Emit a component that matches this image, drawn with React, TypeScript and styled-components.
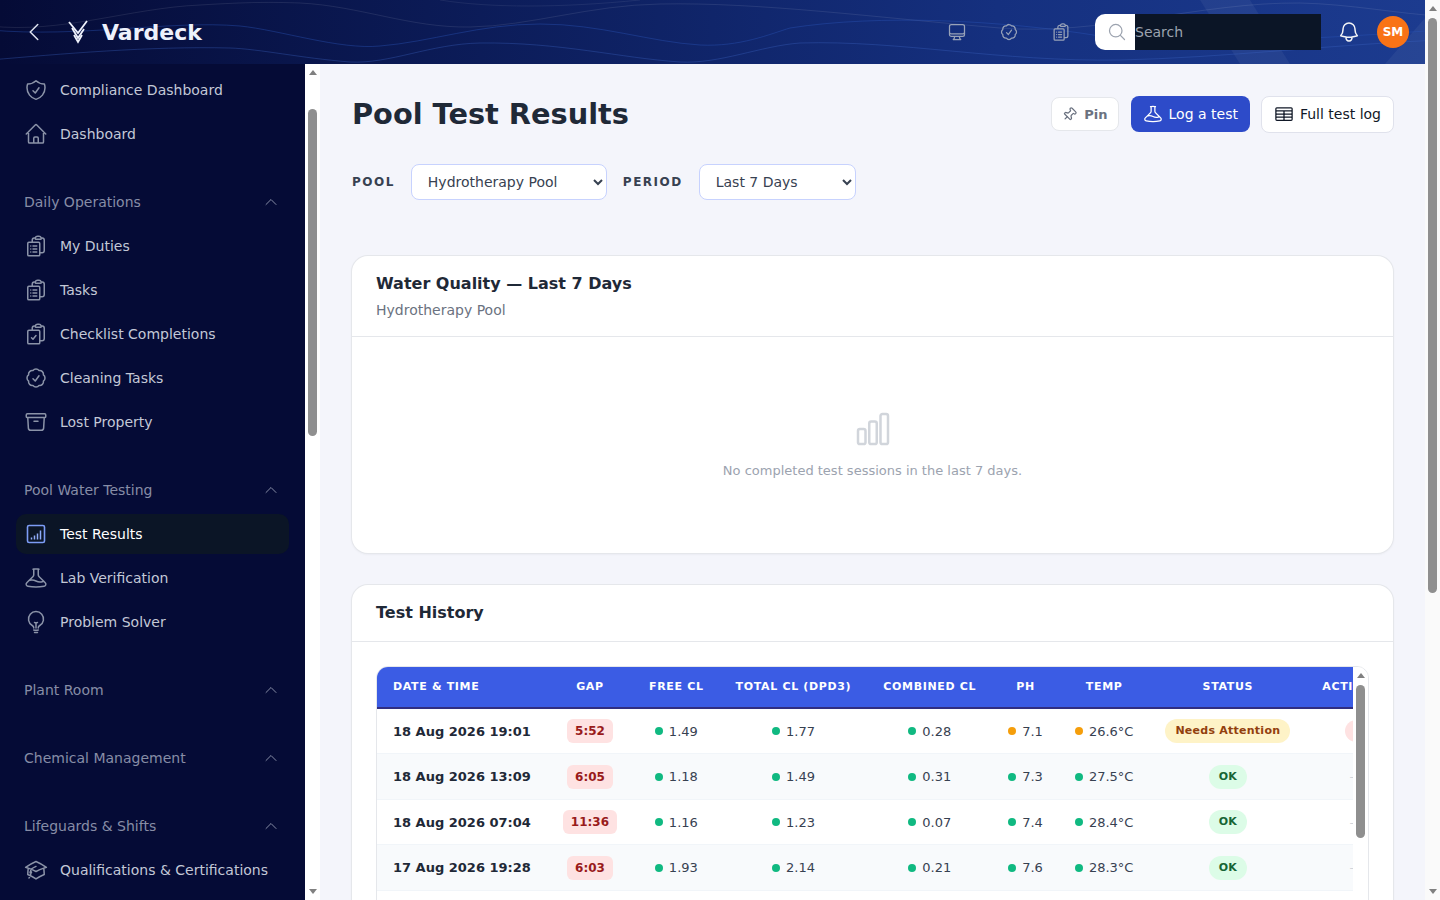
import React from "react";
import styled, { createGlobalStyle } from "styled-components";
import {
  HiOutlineAcademicCap,
  HiOutlineArchiveBox,
  HiOutlineBeaker,
  HiOutlineBell,
  HiOutlineChartBar,
  HiOutlineCheckBadge,
  HiOutlineChevronLeft,
  HiOutlineChevronUp,
  HiOutlineClipboardDocumentCheck,
  HiOutlineClipboardDocumentList,
  HiOutlineComputerDesktop,
  HiOutlineHome,
  HiOutlineLightBulb,
  HiOutlineMagnifyingGlass,
  HiOutlineShieldCheck,
  HiOutlineTableCells,
} from "react-icons/hi2";
import { Pin } from "lucide-react";

const GlobalStyle = createGlobalStyle`
  * { box-sizing: border-box; }
  html, body { margin: 0; padding: 0; }
  html { scrollbar-width: none; }
  body {
    background: #f4f5fb;
    font-family: "DejaVu Sans", sans-serif;
    color: #1f2937;
  }
`;

const Page = styled.div`
  display: flex;
  align-items: flex-start;
`;

const PageColumn = styled.div`
  flex: 1;
  min-width: 0;
`;

const Rail = styled.div<{ $bg?: string }>`
  flex: 0 0 15px;
  display: flex;
  flex-direction: column;
  background: ${(p) => p.$bg || "#fff"};
`;

const PageRail = styled(Rail)`
  position: sticky;
  top: 0;
  height: 100vh;
  z-index: 30;
`;

const RailArrow = styled.div<{ $down?: boolean }>`
  flex: 0 0 17px;
  display: flex;
  align-items: center;
  justify-content: center;

  &::before {
    content: "";
    border-left: 4.5px solid transparent;
    border-right: 4.5px solid transparent;
    border-top: ${(p) => (p.$down ? "5px solid #808080" : "none")};
    border-bottom: ${(p) => (p.$down ? "none" : "5px solid #808080")};
  }
`;

const RailTrack = styled.div`
  flex: 1;
  min-height: 0;
`;

const RailThumb = styled.div<{ $top: number; $height: number }>`
  width: 9px;
  height: ${(p) => p.$height}px;
  margin: ${(p) => p.$top}px 3px 0;
  border-radius: 5px;
  background: #8f8f8f;
`;

const TopBar = styled.header`
  position: sticky;
  top: 0;
  z-index: 20;
  height: 64px;
  display: flex;
  align-items: center;
  padding: 0 16px 0 22px;
  overflow: hidden;
  background: linear-gradient(90deg, #050b36 0%, #0b1a55 30%, #15307f 70%, #1c3b8f 100%);
`;

const WaveLayer = styled.svg`
  position: absolute;
  inset: 0;
  width: 100%;
  height: 100%;
  pointer-events: none;
`;

const BackButton = styled.button`
  position: relative;
  display: flex;
  padding: 0;
  border: none;
  background: none;
  color: #dfe3f0;
  font-size: 24px;
  margin-right: 22px;
`;

const Brand = styled.div`
  position: relative;
  display: flex;
  align-items: center;
  gap: 12px;
  color: #eef1fb;
  font-size: 22px;
  font-weight: 700;
`;

const TopActions = styled.div`
  position: relative;
  margin-left: auto;
  display: flex;
  align-items: center;
`;

const TopIcon = styled.span`
  display: flex;
  width: 20px;
  margin-right: 32px;
  color: #98a2b8;
  font-size: 20px;
`;

const SearchBox = styled.div`
  display: flex;
  height: 36px;
  width: 226px;
  margin-left: -8px;
  margin-right: 16px;
`;

const SearchIconWrap = styled.span`
  display: flex;
  align-items: center;
  justify-content: center;
  width: 40px;
  padding-left: 4px;
  background: #fff;
  border-radius: 10px 0 0 10px;
  color: #9ca3af;
  font-size: 20px;
`;

const SearchInput = styled.input`
  flex: 1;
  min-width: 0;
  border: none;
  outline: none;
  padding: 0;
  background: #0b1526;
  color: #fff;
  font: 14px "DejaVu Sans", sans-serif;

  &::placeholder {
    color: #9ca3af;
  }
`;

const BellWrap = styled.span`
  display: flex;
  color: #f3f4f6;
  font-size: 24px;
  margin-right: 16px;
`;

const Avatar = styled.div`
  display: flex;
  align-items: center;
  justify-content: center;
  width: 32px;
  height: 32px;
  border-radius: 50%;
  background: #f97316;
  color: #fff;
  font-size: 12px;
  font-weight: 700;
`;

const Shell = styled.div`
  display: flex;
  align-items: flex-start;
`;

const Sidebar = styled.aside`
  position: sticky;
  top: 64px;
  flex: 0 0 320px;
  display: flex;
  height: calc(100vh - 64px);
`;

const Nav = styled.nav`
  flex: 1;
  min-width: 0;
  display: flex;
  flex-direction: column;
  padding: 6px 16px;
  overflow: hidden;
  background: #050b36;
`;

const Group = styled.div<{ $first?: boolean }>`
  display: flex;
  flex-direction: column;
  gap: 4px;
  margin-top: ${(p) => (p.$first ? "0" : "28px")};
`;

const GroupHead = styled.div`
  display: flex;
  align-items: center;
  justify-content: space-between;
  height: 40px;
  padding: 0 10px 0 8px;
  color: #878da6;
  font-size: 14px;
`;

const NavItem = styled.a<{ $active?: boolean }>`
  display: flex;
  align-items: center;
  gap: 12px;
  height: 40px;
  padding: 0 8px;
  border-radius: 10px;
  font-size: 14px;
  color: ${(p) => (p.$active ? "#ffffff" : "#c3c8d6")};
  background: ${(p) => (p.$active ? "#0b1526" : "transparent")};
`;

const NavIcon = styled.span<{ $active?: boolean }>`
  display: flex;
  flex: 0 0 24px;
  font-size: 24px;
  color: ${(p) => (p.$active ? "#7c9cf5" : "#8b93a8")};
`;

const Main = styled.main`
  flex: 1;
  min-width: 0;
  padding: 32px 32px 64px;
`;

const TitleRow = styled.div`
  display: flex;
  align-items: center;
  justify-content: space-between;
  height: 36px;
`;

const PageTitle = styled.h1`
  margin: 0;
  font-size: 28.8px;
  font-weight: 700;
  color: #1f2937;
`;

const ButtonRow = styled.div`
  display: flex;
  align-items: center;
  gap: 12px;
  margin-right: -1px;
`;

const PinButton = styled.button`
  display: flex;
  align-items: center;
  gap: 7px;
  height: 34px;
  padding: 0 10px;
  border: 1px solid #e5e7eb;
  border-radius: 8px;
  background: #fff;
  color: #6b7280;
  font: 700 13px "DejaVu Sans", sans-serif;
`;

const PinIcon = styled(Pin)`
  transform: rotate(45deg);
`;

const ActionButton = styled.button<{ $primary?: boolean }>`
  display: flex;
  align-items: center;
  gap: 6px;
  height: ${(p) => (p.$primary ? "36px" : "37px")};
  margin-left: ${(p) => (p.$primary ? "0" : "-1px")};
  padding: 0 12px;
  border: ${(p) => (p.$primary ? "none" : "1px solid #e0e2ec")};
  border-radius: 8px;
  background: ${(p) => (p.$primary ? "#2d4bc9" : "#fff")};
  color: ${(p) => (p.$primary ? "#fff" : "#111827")};
  font: 14px "DejaVu Sans", sans-serif;

  svg {
    font-size: 20px;
  }
`;

const Filters = styled.div`
  display: flex;
  align-items: center;
  gap: 16px;
  margin: 32px 0 56px;
`;

const FilterLabel = styled.label`
  font-size: 12px;
  font-weight: 700;
  letter-spacing: 1.5px;
  color: #374151;
`;

const FilterSelect = styled.select<{ $width: number }>`
  width: ${(p) => p.$width}px;
  height: 36px;
  padding: 0 8px 0 12px;
  border: 1px solid #c7d2fe;
  border-radius: 8px;
  background: #fff;
  color: #374151;
  font: 14px "DejaVu Sans", sans-serif;
`;

const Card = styled.section`
  margin-bottom: 32px;
  background: #fff;
  border-radius: 16px;
  box-shadow: 0 0 0 1px #e5e7eb, 0 1px 3px rgba(15, 23, 42, 0.08);
`;

const CardHead = styled.div<{ $withSub?: boolean }>`
  padding: 18px 24px ${(p) => (p.$withSub ? "17px" : "19px")};
  border-bottom: 1px solid #e5e7eb;
`;

const CardTitle = styled.h2`
  margin: 0;
  font-size: 16px;
  line-height: 19px;
  font-weight: 700;
  color: #1f2937;
`;

const CardSub = styled.p`
  margin: 9px 0 0;
  font-size: 14px;
  line-height: 17px;
  color: #6b7280;
`;

const EmptyState = styled.div`
  display: flex;
  flex-direction: column;
  align-items: center;
  justify-content: center;
  gap: 14px;
  height: 216px;
  padding-bottom: 3px;
  color: #9ca3af;
  font-size: 13px;

  svg {
    font-size: 40px;
    color: #d1d5db;
  }
`;

const CardBody = styled.div`
  padding: 24px;
`;

const TableFrame = styled.div`
  display: flex;
  height: 600px;
  overflow: hidden;
  border: 1px solid #e5e7eb;
  border-radius: 12px;
`;

const TableScroll = styled.div`
  flex: 1;
  min-width: 0;
  overflow: auto;
  scrollbar-width: none;
`;

const Table = styled.table`
  border-collapse: separate;
  border-spacing: 0;
  min-width: 100%;
  white-space: nowrap;
`;

const HeadCell = styled.th<{ $left?: boolean; $action?: boolean }>`
  position: sticky;
  top: 0;
  height: 42px;
  padding: 0 ${(p) => (p.$action ? "24px" : "16px")} 1px 16px;
  background: #3b5ce4;
  border-bottom: 2px solid #312e81;
  color: #fff;
  font-size: 11px;
  font-weight: 700;
  letter-spacing: 0.66px;
  text-align: ${(p) => (p.$left ? "left" : "center")};
`;

const Row = styled.tr`
  &:nth-child(even) td {
    background: #f8fafc;
  }
`;

const Cell = styled.td<{ $left?: boolean }>`
  height: 45.45px;
  padding: 0 16px;
  border-bottom: 1px solid #f1f5f9;
  font-size: 13px;
  line-height: 1;
  color: #374151;
  text-align: ${(p) => (p.$left ? "left" : "center")};
`;

const DateText = styled.span`
  font-weight: 700;
  color: #1f2937;
`;

const GapPill = styled.span`
  display: inline-block;
  padding: 5px 8px;
  border-radius: 6px;
  background: #fee2e2;
  color: #991b1b;
  font-size: 12px;
  line-height: 14px;
  font-weight: 700;
`;

const Reading = styled.span`
  display: inline-flex;
  align-items: center;
  gap: 6px;
`;

const Dot = styled.i<{ $warn?: boolean }>`
  width: 8px;
  height: 8px;
  border-radius: 50%;
  background: ${(p) => (p.$warn ? "#f59e0b" : "#10b981")};
`;

const StatusPill = styled.span<{ $warn?: boolean }>`
  display: inline-block;
  padding: 5px 10px;
  border-radius: 999px;
  background: ${(p) => (p.$warn ? "#fef3c7" : "#dcfce7")};
  color: ${(p) => (p.$warn ? "#92400e" : "#166534")};
  font-size: 11px;
  line-height: 14px;
  font-weight: 700;
  letter-spacing: 0.25px;
`;

const ActionPill = styled.span`
  display: inline-block;
  width: 22px;
  height: 22px;
  border-radius: 11px;
  background: #fee2e2;
  color: #991b1b;
  font-size: 11px;
  line-height: 22px;
  font-weight: 700;
`;

const NoAction = styled.span`
  color: #d1d5db;
`;

const LogoMark = () => (
  <svg width="22" height="26" viewBox="0 0 22 26" fill="none" stroke="#eef1fb" strokeWidth="1.8">
    <path d="M1 3 L10 14 L19 2" />
    <path d="M4 9 L10 19 L16 10" />
    <path d="M6 16 L10 23 L14 16" />
  </svg>
);

const ResultsIcon = () => (
  <svg width="24" height="24" viewBox="0 0 24 24" fill="none">
    <rect x="3.5" y="3.5" width="17" height="17" rx="1.6" stroke="#7c9cf5" strokeWidth="1.6" />
    <path d="M7.5 17.5v-2M10.5 17.5v-4M13.5 17.5v-6M16.5 17.5v-9" stroke="#8fabf8" strokeWidth="1.5" />
  </svg>
);

const Waves = () => (
  <WaveLayer viewBox="0 0 1425 64" preserveAspectRatio="none" fill="none">
    <path d="M1200 0 L1250 0 L1290 64 L1240 64 Z" fill="#ffffff" fillOpacity="0.05" />
    <path d="M1385 64 L1425 18 L1425 64 Z" fill="#ffffff" fillOpacity="0.05" />
    <path
      d="M-10 26 C60 34 130 8 200 5 C250 2 270 2 300 3 C360 6 410 28 470 27 C530 26 590 5 660 4 C760 2 880 18 1000 28 C1100 36 1200 2 1300 3 C1350 4 1400 14 1440 16"
      stroke="#ffffff"
      strokeOpacity="0.09"
    />
    <path
      d="M-10 30 C80 38 170 20 240 26 C280 30 340 50 380 46 C430 42 480 24 540 24 C600 24 650 42 700 45 C740 47 770 34 790 28 C880 14 1000 20 1100 36 C1180 46 1300 40 1440 30"
      stroke="#2b55b8"
      strokeOpacity="0.4"
    />
    <path
      d="M-10 60 C60 54 150 46 230 48 C260 49 300 58 350 62 C390 64 430 44 480 43 C560 42 620 58 680 62 C720 64 760 46 800 43 C900 40 1000 62 1120 60 C1220 58 1340 44 1440 40"
      stroke="#3c63c4"
      strokeOpacity="0.35"
    />
    <path d="M440 0 C490 8 560 8 640 0" stroke="#ffffff" strokeOpacity="0.07" />
  </WaveLayer>
);

type NavEntry = { label: string; icon: React.ReactNode; active?: boolean };
type NavGroup = { title?: string; items: NavEntry[] };

const navGroups: NavGroup[] = [
  {
    items: [
      { label: "Compliance Dashboard", icon: <HiOutlineShieldCheck /> },
      { label: "Dashboard", icon: <HiOutlineHome /> },
    ],
  },
  {
    title: "Daily Operations",
    items: [
      { label: "My Duties", icon: <HiOutlineClipboardDocumentList /> },
      { label: "Tasks", icon: <HiOutlineClipboardDocumentList /> },
      { label: "Checklist Completions", icon: <HiOutlineClipboardDocumentCheck /> },
      { label: "Cleaning Tasks", icon: <HiOutlineCheckBadge /> },
      { label: "Lost Property", icon: <HiOutlineArchiveBox /> },
    ],
  },
  {
    title: "Pool Water Testing",
    items: [
      { label: "Test Results", icon: <ResultsIcon />, active: true },
      { label: "Lab Verification", icon: <HiOutlineBeaker /> },
      { label: "Problem Solver", icon: <HiOutlineLightBulb /> },
    ],
  },
  { title: "Plant Room", items: [] },
  { title: "Chemical Management", items: [] },
  {
    title: "Lifeguards & Shifts",
    items: [{ label: "Qualifications & Certifications", icon: <HiOutlineAcademicCap /> }],
  },
];

type TestRow = {
  date: string;
  gap: string;
  free: string;
  total: string;
  combined: string;
  ph: string;
  temp: string;
  warn?: boolean;
};

const rows: TestRow[] = [
  { date: "18 Aug 2026 19:01", gap: "5:52", free: "1.49", total: "1.77", combined: "0.28", ph: "7.1", temp: "26.6°C", warn: true },
  { date: "18 Aug 2026 13:09", gap: "6:05", free: "1.18", total: "1.49", combined: "0.31", ph: "7.3", temp: "27.5°C" },
  { date: "18 Aug 2026 07:04", gap: "11:36", free: "1.16", total: "1.23", combined: "0.07", ph: "7.4", temp: "28.4°C" },
  { date: "17 Aug 2026 19:28", gap: "6:03", free: "1.93", total: "2.14", combined: "0.21", ph: "7.6", temp: "28.3°C" },
];

const headers = ["GAP", "FREE CL", "TOTAL CL (DPD3)", "COMBINED CL", "PH", "TEMP", "STATUS"];

const ScrollRail: React.FC<{ top: number; height: number; as?: typeof Rail; bg?: string }> = ({
  top,
  height,
  as: Comp = Rail,
  bg,
}) => (
  <Comp $bg={bg}>
    <RailArrow />
    <RailTrack>
      <RailThumb $top={top} $height={height} />
    </RailTrack>
    <RailArrow $down />
  </Comp>
);

export default function App(): JSX.Element {
  return (
    <>
      <GlobalStyle />
      <Page>
        <PageColumn>
          <TopBar>
            <Waves />
            <BackButton aria-label="Back">
              <HiOutlineChevronLeft />
            </BackButton>
            <Brand>
              <LogoMark />
              Vardeck
            </Brand>
            <TopActions>
              <TopIcon><HiOutlineComputerDesktop /></TopIcon>
              <TopIcon><HiOutlineCheckBadge /></TopIcon>
              <TopIcon><HiOutlineClipboardDocumentList /></TopIcon>
              <SearchBox>
                <SearchIconWrap><HiOutlineMagnifyingGlass /></SearchIconWrap>
                <SearchInput placeholder="Search" />
              </SearchBox>
              <BellWrap><HiOutlineBell /></BellWrap>
              <Avatar>SM</Avatar>
            </TopActions>
          </TopBar>
          <Shell>
            <Sidebar>
              <Nav>
                {navGroups.map((group, i) => (
                  <Group key={i} $first={i === 0}>
                    {group.title && (
                      <GroupHead>
                        {group.title}
                        <HiOutlineChevronUp size={16} />
                      </GroupHead>
                    )}
                    {group.items.map((item) => (
                      <NavItem key={item.label} $active={item.active}>
                        <NavIcon $active={item.active}>{item.icon}</NavIcon>
                        {item.label}
                      </NavItem>
                    ))}
                  </Group>
                ))}
              </Nav>
              <ScrollRail top={28} height={327} />
            </Sidebar>
            <Main>
              <TitleRow>
                <PageTitle>Pool Test Results</PageTitle>
                <ButtonRow>
                  <PinButton><PinIcon size={15} strokeWidth={2} /> Pin</PinButton>
                  <ActionButton $primary><HiOutlineBeaker /> Log a test</ActionButton>
                  <ActionButton><HiOutlineTableCells /> Full test log</ActionButton>
                </ButtonRow>
              </TitleRow>
              <Filters>
                <FilterLabel>POOL</FilterLabel>
                <FilterSelect $width={196} defaultValue="hydro">
                  <option value="hydro">Hydrotherapy Pool</option>
                </FilterSelect>
                <FilterLabel>PERIOD</FilterLabel>
                <FilterSelect $width={157} defaultValue="7">
                  <option value="7">Last 7 Days</option>
                </FilterSelect>
              </Filters>
              <Card>
                <CardHead $withSub>
                  <CardTitle>Water Quality — Last 7 Days</CardTitle>
                  <CardSub>Hydrotherapy Pool</CardSub>
                </CardHead>
                <EmptyState>
                  <HiOutlineChartBar />
                  No completed test sessions in the last 7 days.
                </EmptyState>
              </Card>
              <Card>
                <CardHead>
                  <CardTitle>Test History</CardTitle>
                </CardHead>
                <CardBody>
                  <TableFrame>
                    <TableScroll>
                      <Table>
                        <thead>
                          <tr>
                            <HeadCell $left>DATE &amp; TIME</HeadCell>
                            {headers.map((h) => (
                              <HeadCell key={h}>{h}</HeadCell>
                            ))}
                            <HeadCell $action>ACTIONS</HeadCell>
                          </tr>
                        </thead>
                        <tbody>
                          {rows.map((r) => (
                            <Row key={r.date}>
                              <Cell $left><DateText>{r.date}</DateText></Cell>
                              <Cell><GapPill>{r.gap}</GapPill></Cell>
                              <Cell><Reading><Dot />{r.free}</Reading></Cell>
                              <Cell><Reading><Dot />{r.total}</Reading></Cell>
                              <Cell><Reading><Dot />{r.combined}</Reading></Cell>
                              <Cell><Reading><Dot $warn={r.warn} />{r.ph}</Reading></Cell>
                              <Cell><Reading><Dot $warn={r.warn} />{r.temp}</Reading></Cell>
                              <Cell>
                                <StatusPill $warn={r.warn}>{r.warn ? "Needs Attention" : "OK"}</StatusPill>
                              </Cell>
                              <Cell>{r.warn ? <ActionPill>!</ActionPill> : <NoAction>—</NoAction>}</Cell>
                            </Row>
                          ))}
                        </tbody>
                      </Table>
                    </TableScroll>
                    <ScrollRail top={1} height={153} />
                  </TableFrame>
                </CardBody>
              </Card>
            </Main>
          </Shell>
        </PageColumn>
        <ScrollRail as={PageRail} bg="#fafafa" top={1} height={575} />
      </Page>
    </>
  );
}
